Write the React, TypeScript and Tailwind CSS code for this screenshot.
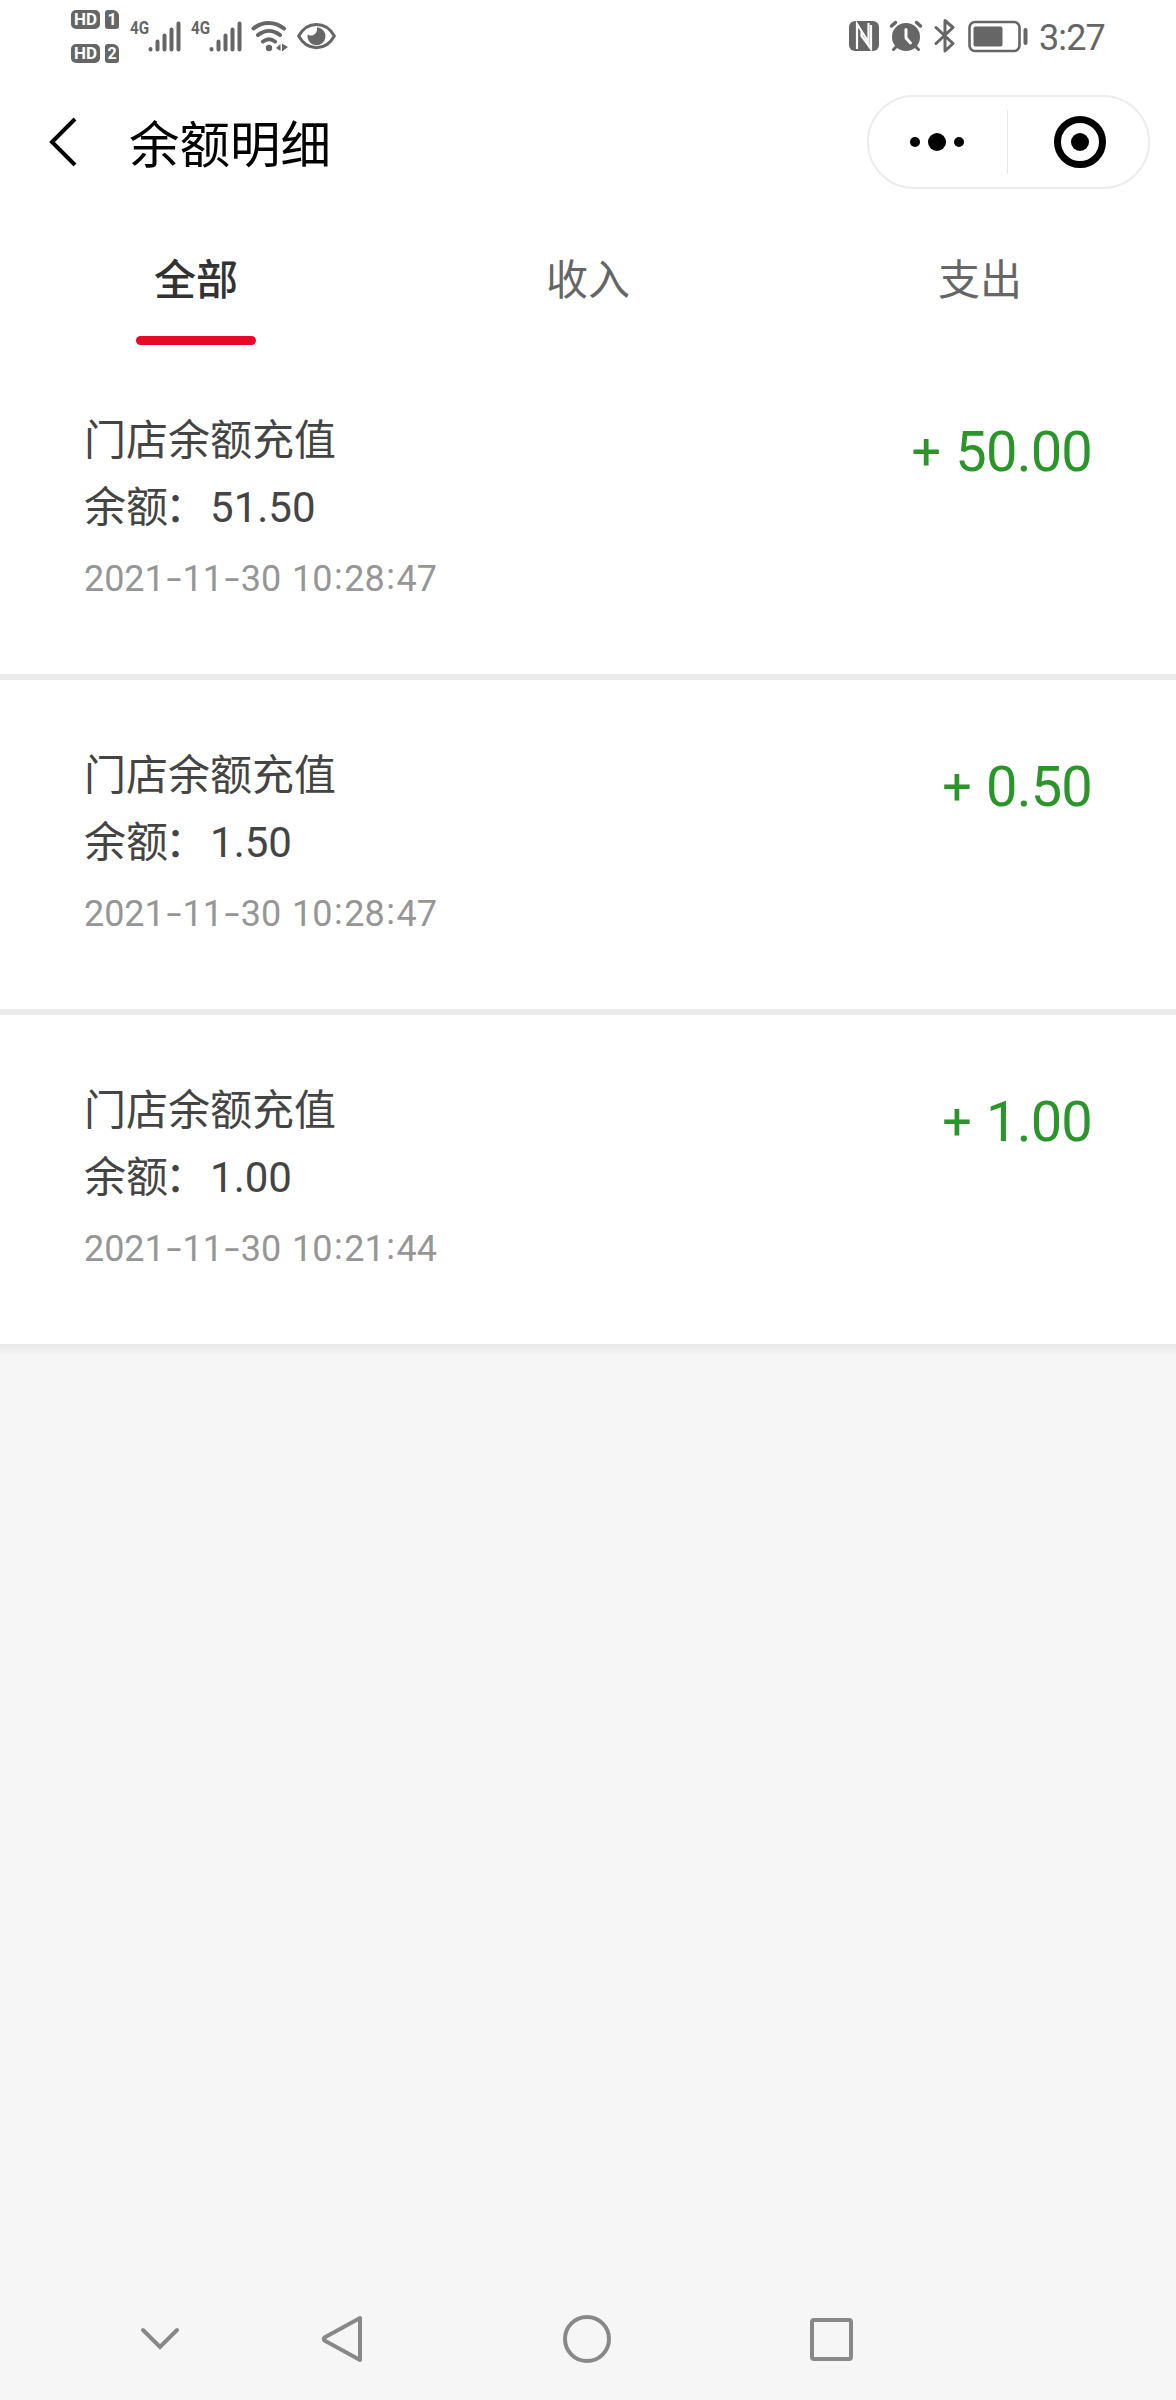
import { useState } from "react";

const TABS = ["全部", "收入", "支出"];

const RECORDS = [
  { id: 1, title: "门店余额充值", balance: "51.50", time: "2021-11-30 10:28:47", amount: "50.00" },
  { id: 2, title: "门店余额充值", balance: "1.50", time: "2021-11-30 10:28:47", amount: "0.50" },
  { id: 3, title: "门店余额充值", balance: "1.00", time: "2021-11-30 10:21:44", amount: "1.00" },
];

function SimBadge({ slot }: { slot: string }) {
  return (
    <div className="flex h-[19px] gap-[5px] text-white font-bold">
      <span className="w-[29px] rounded-[5px] bg-[#666] text-center text-[17px] leading-[19px] font-['Roboto',sans-serif]">HD</span>
      <span className="w-[14px] rounded-[3px] rounded-tr-[6px] bg-[#666] text-center text-[16px] leading-[19px] font-['Roboto',sans-serif]">{slot}</span>
    </div>
  );
}

function Signal() {
  return (
    <div className="flex h-[31px] w-[50px]">
      <span className="w-[17px] origin-left -translate-x-px scale-x-[0.8] whitespace-nowrap text-[19px] font-bold leading-[14px] font-['Roboto',sans-serif]">4G</span>
      <svg width="33" height="31" viewBox="0 0 33 31" stroke="#666" strokeWidth="4" strokeLinecap="round">
        <path d="M2.5 28v.5M9.5 20.5v8M16.5 14.5v14M23.5 8.5v20M30.5 2.5v26" />
      </svg>
    </div>
  );
}

function StatusBar() {
  return (
    <div className="flex h-[74px] items-start justify-between pl-[71px] pr-[72px] text-[#666]">
      <div className="flex">
        <div className="flex flex-col gap-[15px] pt-[10px]">
          <SimBadge slot="1" />
          <SimBadge slot="2" />
        </div>
        <div className="ml-3 flex gap-[11px] pt-[21px]">
          <Signal />
          <Signal />
        </div>
        <svg className="ml-[9px] mt-[20px]" width="38" height="32" viewBox="0 0 38 32" fill="none" stroke="#666" strokeWidth="4" strokeLinecap="round">
          <path d="M2.5 8.5C11 1 24 1 33 8.5M7 15c7-5.5 15-5.5 22 0M12 21.5c4-3 8-3 12 0" />
          <circle cx="18" cy="28" r="3.2" fill="#666" stroke="none" />
          <path d="M25 28l4.5-4v7zM31 23.5v8l6-4.5z" fill="#666" stroke="none" />
        </svg>
        <svg className="ml-[8px] mt-[22px]" width="39" height="28" viewBox="0 0 39 28" fill="none" stroke="#666" strokeWidth="3">
          <path d="M1.7 14C10-1.5 29-1.5 37.3 14 29 29.5 10 29.5 1.7 14z" />
          <path d="M20 5.2a9 9 0 1 1-9.300 7C14 15.500 21 12.500 20 5.200z" fill="#666" stroke="none" />
        </svg>
      </div>
      <div className="flex">
        <svg className="mt-[21px]" width="30" height="30" viewBox="0 0 30 30">
          <rect width="30" height="30" rx="6" fill="#666" />
          <path d="M8 28V3l11.500 18V2M12.500 11v4L22 28V4" fill="none" stroke="#fff" strokeWidth="2.200" />
        </svg>
        <svg className="ml-[10px] mt-[20px]" width="34" height="32" viewBox="0 0 34 32" fill="none" stroke="#666" strokeLinecap="round" strokeLinejoin="round">
          <circle cx="17" cy="17" r="14" fill="#666" stroke="none" />
          <path d="M2.5 6l4-3.5M31.5 6l-4-3.5" strokeWidth="3.5" />
          <path d="M7 27l-2.5 2.5M27 27l2.5 2.5" strokeWidth="3" />
          <path d="M17 9.5V18l4.5 5" stroke="#fff" strokeWidth="3" />
        </svg>
        <svg className="ml-[11px] mt-[18px]" width="22" height="35" viewBox="0 0 22 35" fill="none" stroke="#666" strokeWidth="3" strokeLinecap="round" strokeLinejoin="round">
          <path d="M2 9.5l17 16-8 7.5V2.5l8 7-17 16" />
        </svg>
        <svg className="ml-[12px] mt-[20px]" width="60" height="33" viewBox="0 0 60 33">
          <rect x="1.5" y="2" width="50" height="29" rx="5.5" fill="none" stroke="#666" strokeWidth="2.6" />
          <rect x="5.5" y="6.5" width="29" height="20" rx="2" fill="#666" />
          <rect x="55.5" y="8" width="4" height="17" rx="2" fill="#666" />
        </svg>
        <span className="ml-[11px] mt-[17px] w-[65px] whitespace-nowrap text-[36px] leading-[43px] tracking-[-0.9px] font-['Roboto',sans-serif]">3:27</span>
      </div>
    </div>
  );
}

function TitleBar() {
  return (
    <header className="flex h-[136px] items-start pl-[49px] pr-[26px] pt-[21px]">
      <svg className="mt-[21px]" width="28" height="52" viewBox="0 0 28 52" fill="none" stroke="#000" strokeWidth="4">
        <path d="M26 3L3 26l23 23" />
      </svg>
      <h1 className="ml-[52px] mt-[15px] text-[50.5px] leading-[72px] text-black">余额明细</h1>
      <div className="ml-auto flex h-[94px] w-[283px] items-center rounded-full border-2 border-[#ececec]">
        <button className="flex h-full flex-1 items-center justify-center gap-[8px] pr-[2px]">
          <span className="size-[10px] rounded-full bg-black" />
          <span className="size-[18px] rounded-full bg-black" />
          <span className="size-[10px] rounded-full bg-black" />
        </button>
        <span className="h-16 w-px bg-[#e8e8e8]" />
        <button className="flex h-full flex-1 items-center justify-center pl-[5px]">
          <span className="flex size-[52px] items-center justify-center rounded-full border-[7px] border-black">
            <span className="size-[18px] rounded-full bg-black" />
          </span>
        </button>
      </div>
    </header>
  );
}

// timestamp with wide separators
function Timestamp({ value }: { value: string }) {
  return (
    <p className="mt-[5px] flex text-[36px] tracking-[-0.1px] text-[#969696]">
      {value.split(/([-: ])/).map((part, i) => {
        if (part === "-") {
          return <span key={i} className="w-[18px] scale-x-[1.5] text-center">-</span>;
        }
        if (part === ":") {
          return <span key={i} className="w-[12px] -translate-y-[2px] text-center">:</span>;
        }
        if (part === " ") {
          return <span key={i} className="w-[11px] whitespace-pre"> </span>;
        }
        return <span key={i}>{part}</span>;
      })}
    </p>
  );
}

function NavBar() {
  return (
    <nav className="flex h-[122px] items-center pl-[139px]">
      <svg width="42" height="26" viewBox="0 0 42 26" fill="none" stroke="#888" strokeWidth="4" strokeLinecap="round">
        <path d="M4 4l17 17L38 4" />
      </svg>
      <svg className="ml-[139px]" width="44" height="50" viewBox="0 0 44 50" fill="none" stroke="#888" strokeWidth="4" strokeLinejoin="round">
        <path d="M40 4v42L4.5 26.5q-1.5-1.5 0-3z" />
      </svg>
      <span className="ml-[199px] size-[48px] rounded-full border-4 border-[#888]" />
      <span className="ml-[199px] size-[43px] rounded-[4px] border-4 border-[#888]" />
    </nav>
  );
}

export default function App() {
  const [active, setActive] = useState(0);

  return (
    <main className="flex h-[2400px] w-[1176px] flex-col bg-[#f6f6f6] font-['Roboto','Noto_Sans_CJK_SC',sans-serif]">
      <div className="bg-white">
        <StatusBar />
        <TitleBar />
        <div className="flex h-[135px]">
          {TABS.map((tab, i) => (
            <button
              key={tab}
              onClick={() => setActive(i)}
              className={`flex flex-1 flex-col items-center pt-[41px] text-[42px] leading-[60px] ${
                i === active ? "font-medium text-[#323233]" : "text-[#666]"
              }`}
            >
              {tab}
              {i === active && <span className="mt-[25px] h-[9px] w-[120px] rounded-full bg-[#e60a28]" />}
            </button>
          ))}
        </div>
        {RECORDS.map((r) => (
          <div key={r.id} className="flex h-[335px] justify-between border-b-[6px] border-[#ebebeb] px-[84px] pt-[62px] last:h-[329px] last:border-b-0">
            <div className="text-[42px] leading-[67px] text-[#444]">
              <p>{r.title}</p>
              <p>
                余额<span className="inline-block -translate-x-[3px]">：</span>{r.balance}
              </p>
              <Timestamp value={r.time} />
            </div>
            <p className="mt-[12px] flex text-[56px] leading-[67px] tracking-[-0.8px] text-[#2a962a]">
              <span className="mr-[15px] -translate-y-px text-[52px]">+</span>
              {r.amount}
            </p>
          </div>
        ))}
      </div>
      <div className="h-3 bg-linear-to-b from-[#e9e9e9] to-[#f6f6f6]" />
      <div className="flex-1" />
      <NavBar />
    </main>
  );
}
